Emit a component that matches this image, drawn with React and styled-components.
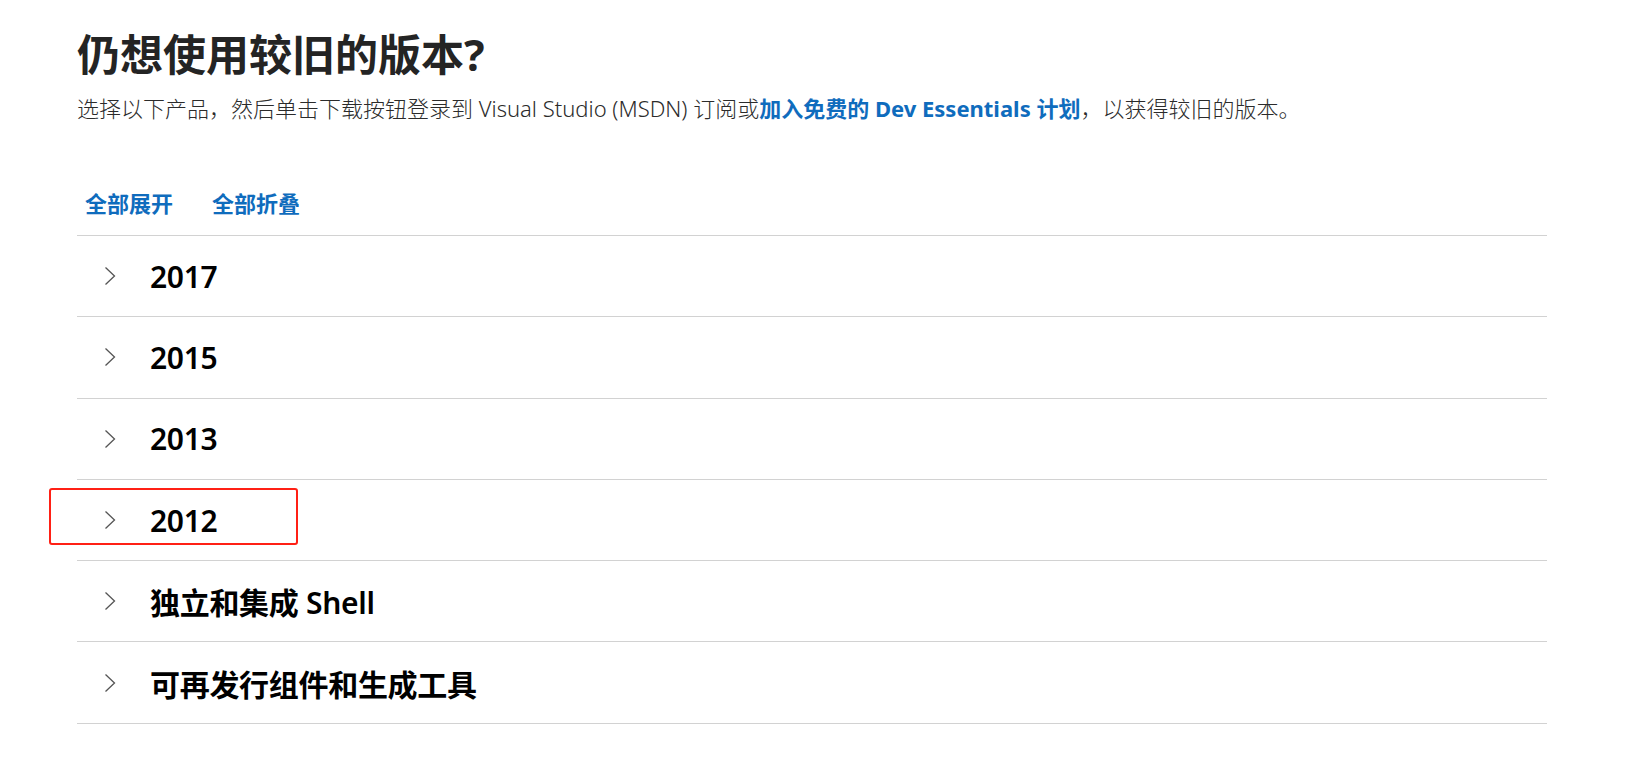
import React from 'react';
import styled, { createGlobalStyle } from 'styled-components';

const GlobalStyle = createGlobalStyle`
    html, body {
        margin: 0;
        padding: 0;
        background: #ffffff;
    }
    body {
        font-family: "Noto Sans", "Noto Sans CJK SC", sans-serif;
        color: #262626;
    }
`;

const releases = [
    { id: '2017', label: '2017' },
    { id: '2015', label: '2015' },
    { id: '2013', label: '2013' },
    { id: '2012', label: '2012', marked: true },
    { id: 'shell', label: '独立和集成 Shell' },
    { id: 'redist', label: '可再发行组件和生成工具' }
];

function Chevron() {
    return (
        <ChevronIcon viewBox="0 0 12 20" aria-hidden="true">
            <polyline points="1.5,1.5 10.5,10 1.5,18.5" />
        </ChevronIcon>
    );
}

function App() {
    return (
        <>
            <GlobalStyle />
            <Page>
                <Title>仍想使用较旧的版本?</Title>
                <Lead>
                    选择以下产品，然后单击下载按钮登录到 Visual Studio (MSDN) 订阅或
                    <LeadLink href="#">加入免费的 Dev Essentials 计划</LeadLink>
                    ，以获得较旧的版本。
                </Lead>
                <Toolbar>
                    <ToggleLink type="button">全部展开</ToggleLink>
                    <ToggleLink type="button">全部折叠</ToggleLink>
                </Toolbar>
                <ReleaseList>
                    {releases.map((r) => (
                        <ReleaseRow key={r.id}>
                            <Chevron />
                            <ReleaseName>{r.label}</ReleaseName>
                            {r.marked && <Highlight />}
                        </ReleaseRow>
                    ))}
                </ReleaseList>
            </Page>
        </>
    );
}

const Page = styled.main`
    width: 1470px;
    padding: 0 0 0 77px;
`;

const Title = styled.h1`
    margin: 0;
    padding-top: 27px;
    font-size: 43px;
    line-height: 56px;
    font-weight: 700;
    color: #242424;
    font-family: "Noto Sans", "Noto Sans CJK SC", sans-serif;
`;

const Lead = styled.p`
    margin: 10px 0 0;
    font-size: 22px;
    line-height: 30px;
    font-weight: 300;
    color: #2b2b2b;
`;

const LeadLink = styled.a`
    color: #0f6cbd;
    font-weight: 700;
    text-decoration: none;
`;

const Toolbar = styled.div`
    display: flex;
    gap: 39px;
    box-sizing: border-box;
    padding: 0 0 6px 8px;
    margin-top: 52px;
    height: 60px;
    align-items: center;
`;

const ToggleLink = styled.button`
    border: 0;
    background: none;
    padding: 0;
    font-family: "Noto Sans", "Noto Sans CJK SC", sans-serif;
    font-size: 22px;
    font-weight: 700;
    color: #0f6cbd;
    cursor: pointer;
`;

const ReleaseList = styled.ul`
    list-style: none;
    margin: 0;
    padding: 0;
    border-bottom: 1px solid #d2d2d2;
`;

const ReleaseRow = styled.li`
    position: relative;
    display: flex;
    align-items: center;
    height: 80.3px;
    padding-left: 27px;
    border-top: 1px solid #d2d2d2;
`;

const ChevronIcon = styled.svg`
    width: 12px;
    height: 20px;
    flex: none;
    fill: none;
    stroke: #555555;
    stroke-width: 1.3;
`;

const ReleaseName = styled.span`
    margin-left: 34px;
    font-size: 30px;
    font-weight: 600;
    letter-spacing: -0.3px;
    color: #000000;
`;

const Highlight = styled.span`
    position: absolute;
    left: -28px;
    top: 8px;
    width: 245px;
    height: 53px;
    border: 2px solid #ff2015;
    border-radius: 3px;
    pointer-events: none;
`;

export default App;
